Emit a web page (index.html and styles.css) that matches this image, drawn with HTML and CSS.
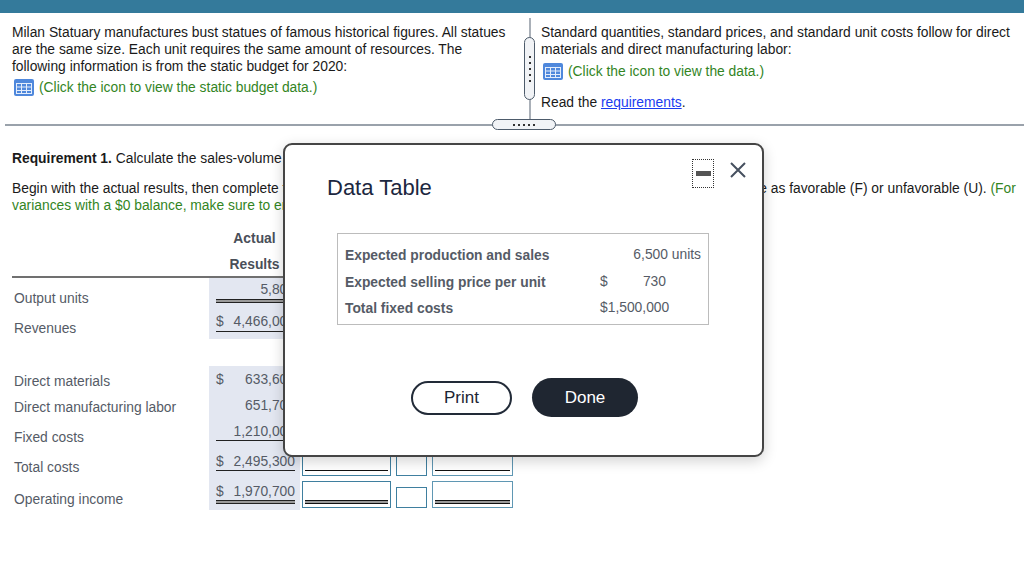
FILE: index.html
```html
<!DOCTYPE html>
<html lang="en">
<head>
<meta charset="utf-8">
<title>Data Table</title>
<link rel="stylesheet" href="styles.css">
</head>
<body>
<div class="topbar"></div>
<div class="panes">
  <div class="pane pane-left">
    <p>Milan Statuary manufactures bust statues of famous historical figures. All statues are the same size. Each unit requires the same amount of resources. The following information is from the static budget for 2020:</p>
    <div class="data-link link-left">
      <svg class="grid-icon" viewBox="0 0 20 17"><rect width="20" height="17" rx="2" fill="#4f88dc"/><rect x="2" y="4" width="16" height="11" fill="#e4edfb"/><path d="M3 5h4v2.5H3zM8 5h4v2.5H8zM13 5h4v2.5h-4zM3 8.5h4V11H3zM8 8.5h4V11H8zM13 8.5h4V11h-4zM3 12h4v2H3zM8 12h4v2H8zM13 12h4v2h-4z" fill="#4f88dc"/></svg>
      <span class="green">(Click the icon to view the static budget data.)</span>
    </div>
  </div>
  <div class="v-split"><div class="v-handle"><i></i><i></i><i></i><i></i><i></i></div></div>
  <div class="pane pane-right">
    <p>Standard quantities, standard prices, and standard unit costs follow for direct materials and direct manufacturing labor:</p>
    <div class="data-link link-right">
      <svg class="grid-icon" viewBox="0 0 20 17"><rect width="20" height="17" rx="2" fill="#4f88dc"/><rect x="2" y="4" width="16" height="11" fill="#e4edfb"/><path d="M3 5h4v2.5H3zM8 5h4v2.5H8zM13 5h4v2.5h-4zM3 8.5h4V11H3zM8 8.5h4V11H8zM13 8.5h4V11h-4zM3 12h4v2H3zM8 12h4v2H8zM13 12h4v2h-4z" fill="#4f88dc"/></svg>
      <span class="green">(Click the icon to view the data.)</span>
    </div>
    <p class="read">Read the <a href="#">requirements</a>.</p>
  </div>
</div>
<div class="h-split"><div class="h-handle"><i></i><i></i><i></i><i></i><i></i></div></div>

<main class="work">
  <p class="req"><b>Requirement 1.</b> Calculate the sales-volume variances and the flexible-budget variances for revenues and costs.</p>
  <p class="begin">Begin with the actual results, then complete the flexible-budget performance report below and then label each cost variance as favorable (F) or unfavorable (U). <span class="green">(For variances with a $0 balance, make sure to enter "0" in the appropriate cell.)</span></p>

  <div class="report">
    <div class="head"><div></div><div class="head-cell">Actual</div></div>
    <div class="head head-last"><div></div><div class="head-cell">Results</div></div>

    <div class="row r1"><div class="lbl">Output units</div><div class="act"><div class="val dbl"><span></span><span>5,800</span></div></div></div>
    <div class="row r2"><div class="lbl">Revenues</div><div class="act"><div class="val sgl"><span>$</span><span>4,466,000</span></div></div></div>
    <div class="row r0"></div>
    <div class="row r3"><div class="lbl">Direct materials</div><div class="act"><div class="val"><span>$</span><span>633,600</span></div></div></div>
    <div class="row r4"><div class="lbl">Direct manufacturing labor</div><div class="act"><div class="val"><span></span><span>651,700</span></div></div></div>
    <div class="row r5"><div class="lbl">Fixed costs</div><div class="act"><div class="val sgl"><span></span><span>1,210,000</span></div></div></div>
    <div class="row r6">
      <div class="lbl">Total costs</div><div class="act"><div class="val sgl"><span>$</span><span>2,495,300</span></div></div>
      <div class="box w1"><div class="line sgl"></div></div><div class="box w2"></div><div class="box w3"><div class="line sgl"></div></div>
    </div>
    <div class="row r7">
      <div class="lbl">Operating income</div><div class="act"><div class="val dbl"><span>$</span><span>1,970,700</span></div></div>
      <div class="box w1"><div class="line dbl"></div></div><div class="box w2 short"></div><div class="box w3"><div class="line dbl"></div></div>
    </div>
  </div>
</main>

<section class="modal">
  <header class="modal-head">
    <h2>Data Table</h2>
    <button class="min-btn" aria-label="Minimize"><span></span></button>
    <button class="close-btn" aria-label="Close"><svg viewBox="0 0 16 16" width="16" height="16"><path d="M1 1l14 14M15 1L1 15" stroke="#46505f" stroke-width="2" fill="none"/></svg></button>
  </header>
  <div class="data-box">
    <div class="d-lbl">Expected production and sales</div><div class="d-val right">6,500 units</div>
    <div class="d-lbl">Expected selling price per unit</div><div class="d-val split"><span>$</span><span>730</span></div>
    <div class="d-lbl">Total fixed costs</div><div class="d-val">$1,500,000</div>
  </div>
  <div class="actions">
    <button class="btn-print">Print</button>
    <button class="btn-done">Done</button>
  </div>
</section>
</body>
</html>
```
FILE: styles.css
```css
* { box-sizing: border-box; }
html, body { margin: 0; padding: 0; }
body {
  position: relative;
  width: 1024px;
  height: 571px;
  overflow: hidden;
  background: #fff;
  color: #1a1a1a;
  font: 13.83px/17px "Liberation Sans", Arial, sans-serif;
}
p { margin: 0; }
.green { color: #33851f; }
a { color: #1a3cf0; }

.topbar { height: 13px; background: #347a9b; }

.panes { display: flex; height: 111px; }
.pane-left { width: 529px; padding: 11px 12px 0; }
.pane-right { flex: 1; padding: 11px 8px 0 10px; }
.data-link { display: flex; align-items: center; }
.link-left { margin: 4px 0 0 2px; gap: 5px; }
.link-right { margin: 5px 0 0 2px; gap: 5px; }
.read { margin-top: 14px; }
.grid-icon { width: 20px; height: 17px; flex: none; }

.v-split { position: relative; width: 2px; margin-top: 5px; background: #aab0b8; }
.v-handle {
  position: absolute;
  left: -5px;
  top: 19px;
  width: 11px;
  height: 63px;
  display: flex;
  flex-direction: column;
  align-items: center;
  justify-content: center;
  gap: 4px;
  background: #f1f3f6;
  border: 1px solid #4d5b6b;
  border-radius: 6px;
}
.v-handle i, .h-handle i { width: 2px; height: 2px; background: #333; }

.h-split { position: relative; height: 2px; margin-left: 5px; background: #9aa2ab; }
.h-handle {
  position: absolute;
  left: 487px;
  top: -5px;
  width: 64px;
  height: 11px;
  display: flex;
  align-items: center;
  justify-content: center;
  gap: 3px;
  background: #f1f3f6;
  border: 1px solid #4d5b6b;
  border-radius: 6px;
}

.work { padding: 0 6px 0 12px; }
.req { margin-top: 24px; }
.begin { margin-top: 13px; }

.report { margin-top: 11px; width: 501px; color: #555b66; }
.head, .row { display: flex; }
.head { height: 26px; align-items: center; }
.head > div:first-child { width: 197px; }
.head-cell { width: 91px; text-align: center; font-weight: bold; color: #4a4f59; }
.head-last { height: 27px; padding-top: 1px; border-bottom: 2px solid #707070; }
.lbl { width: 197px; flex: none; padding-left: 2px; }
.act { width: 91px; flex: none; background: #e3e7f1; padding: 0 5px 0 7px; align-self: stretch; }
.val { display: flex; justify-content: space-between; }
.val.sgl { border-bottom: 1px solid #222; }
.val.dbl { border-bottom: 1px solid #222; box-shadow: 0 1px 0 #9a9a9a, 0 2px 0 #9a9a9a, 0 3px 0 #222; }

.r1 { height: 31px; } .r1 .lbl { padding-top: 12px; } .r1 .val { padding: 3px 0 1px; }
.r2 { height: 30px; } .r2 .lbl { padding-top: 11px; } .r2 .val { padding: 4px 0 1px; }
.r0 { height: 27px; }
.r3 { height: 27px; } .r3 .lbl { padding-top: 7px; } .r3 .val { padding-top: 5px; }
.r4 { height: 26px; } .r4 .lbl { padding-top: 6px; } .r4 .val { padding-top: 4px; }
.r5 { height: 26px; } .r5 .lbl { padding-top: 10px; } .r5 .val { padding-top: 4px; }
.r6 { height: 31px; } .r6 .lbl { padding-top: 14px; } .r6 .val { padding-top: 8px; }
.r7 { height: 34px; } .r7 .lbl { padding-top: 15px; } .r7 .val { padding-top: 7px; }

.box { flex: none; border: 1px solid #3f7f9f; background: #fff; display: flex; padding: 0 2px 4px; }
.r6 .box { height: 31px; }
.r7 .box { height: 27px; margin-top: 5px; padding-bottom: 6px; }
.w1 { width: 89px; margin-left: 2px; }
.w2 { width: 31px; margin-left: 5px; }
.w3 { width: 81px; margin-left: 5px; border-color: #5f97b3; }
.r7 .box.short { height: 21px; margin-top: 11px; }
.line { flex: 1; }
.line.sgl { border-bottom: 1px solid #111; }
.line.dbl { border-bottom: 1px solid #111; box-shadow: 0 1px 0 #9a9a9a, 0 2px 0 #9a9a9a, 0 3px 0 #111; }

.modal {
  position: absolute;
  left: 283px;
  top: 143px;
  width: 481px;
  height: 314px;
  background: #fff;
  border: 2px solid #454545;
  border-radius: 9px;
  box-shadow: 0 4px 14px rgba(0, 0, 0, .18);
  display: flex;
  flex-direction: column;
}
.modal-head { display: flex; align-items: flex-start; padding: 14px 16px 0 42px; height: 88px; }
.modal-head h2 { margin: 16px auto 0 0; font-size: 22px; line-height: 26px; font-weight: normal; color: #1c2740; }
.min-btn {
  width: 22px;
  height: 29px;
  padding: 0;
  margin-right: 16px;
  background: none;
  border: 1px dotted #333;
  display: flex;
  align-items: center;
  justify-content: center;
}
.min-btn span { width: 15px; height: 5px; background: #555; }
.close-btn { padding: 0; margin-top: 3px; background: none; border: 0; width: 16px; height: 16px; }

.data-box {
  margin-left: 52px;
  width: 372px;
  height: 92px;
  padding: 8px 7px 0;
  border: 1px solid #bcbcbc;
  display: grid;
  grid-template-columns: 255px 101px;
  grid-auto-rows: 26.5px;
  color: #555b66;
}
.d-lbl { font-weight: bold; padding-top: 5px; }
.d-val { padding-top: 4px; }
.right { text-align: right; }
.split { display: flex; justify-content: space-between; padding-right: 35px; }

.actions { display: flex; align-items: center; margin: 53px 0 0 126px; gap: 20px; }
.btn-print, .btn-done { font: 17px/18px "Liberation Sans", Arial, sans-serif; padding: 0; }
.btn-print { width: 101px; height: 34px; background: #fff; border: 2px solid #222b38; border-radius: 17px; color: #1c2433; }
.btn-done { width: 106px; height: 39px; background: #1f2631; border: 0; border-radius: 20px; color: #fff; }
```
